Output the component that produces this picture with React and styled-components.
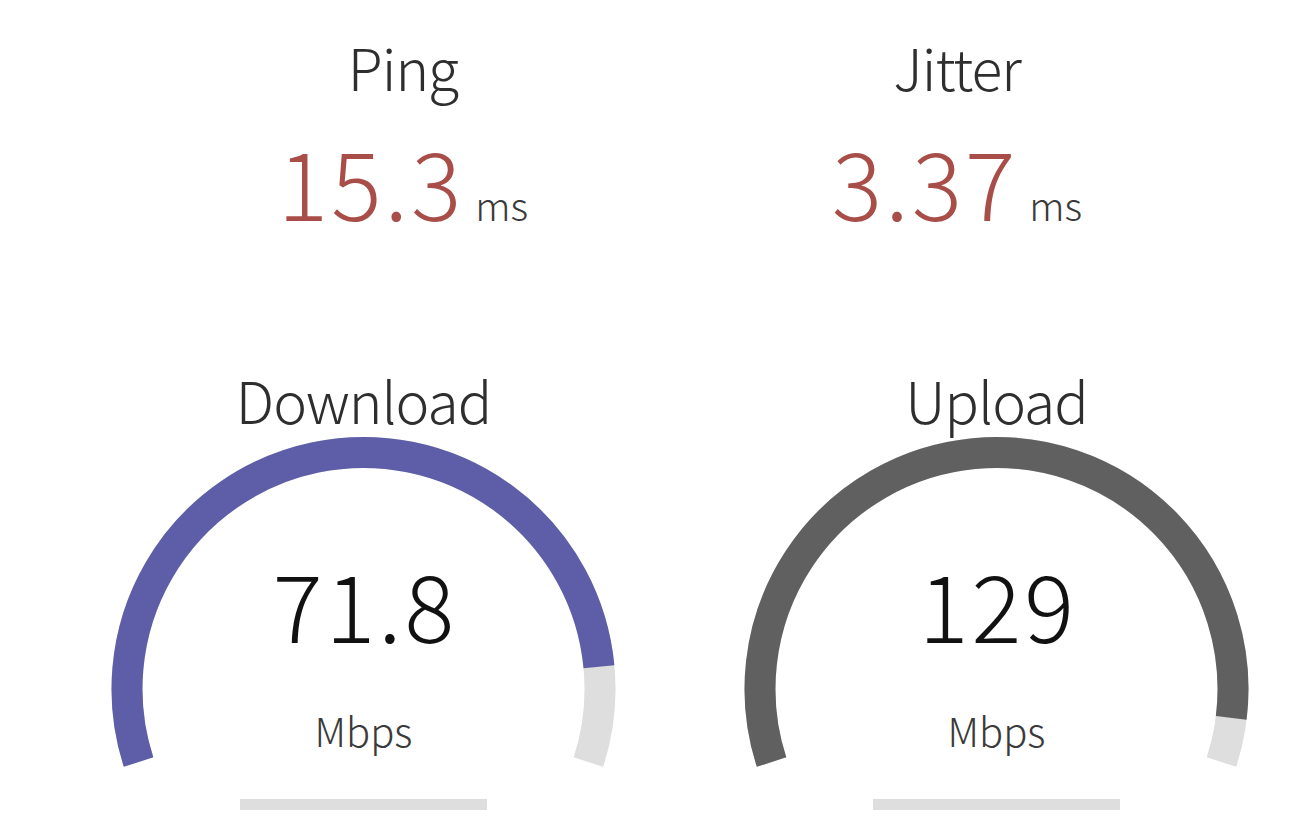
import React from "react";
import styled, { createGlobalStyle } from "styled-components";

const GlobalStyle = createGlobalStyle`
  html, body {
    margin: 0;
    padding: 0;
    background: #ffffff;
    overflow: hidden;
  }
  body {
    font-family: "Noto Sans CJK JP", "Noto Sans", sans-serif;
    color: #333333;
  }
`;

const Page = styled.div`
  width: 1360px;
  display: flex;
  flex-direction: column;
  align-items: center;
  padding-top: 38px;
`;

const Row = styled.div`
  display: flex;
  justify-content: center;
  margin-top: ${(p) => p.$gap || 0}px;
`;

const SmallArea = styled.div`
  width: 554px;
  text-align: center;
`;

const TestName = styled.div`
  font-size: 57px;
  line-height: 1;
  font-weight: 300;
  letter-spacing: -1px;
  color: #2e2e2e;
  text-align: center;
`;

const SmallValue = styled.div`
  margin-top: 38px;
  font-size: 94px;
  line-height: 1;
  font-weight: 300;
  letter-spacing: 3px;
  color: #a84d48;
  white-space: nowrap;
`;

const SmallUnit = styled.span`
  font-size: 39px;
  margin-left: 11px;
  letter-spacing: 0;
  color: #3a3a3a;
  font-weight: 300;
`;

const MeterArea = styled.div`
  position: relative;
  width: 633px;
`;

const GaugeSvg = styled.svg`
  display: block;
  width: 633px;
  height: 390px;
`;

const Readout = styled.div`
  position: absolute;
  top: 185px;
  left: 0;
  right: 0;
  display: flex;
  flex-direction: column;
  align-items: center;
`;

const MeterValue = styled.div`
  font-size: 93px;
  line-height: 1;
  font-weight: 300;
  letter-spacing: 3px;
  margin-left: 3px;
  color: #111111;
`;

const MeterUnit = styled.div`
  margin-top: 61px;
  font-size: 40px;
  line-height: 1;
  font-weight: 300;
  color: #3a3a3a;
`;

const CX = 316.5;
const CY = 261;
const R = 236.5;
const STROKE = 31;

function point(a) {
  return [CX + R * Math.cos(a), CY + R * Math.sin(a)];
}

function arcPath(from, to) {
  const [x0, y0] = point(from);
  const [x1, y1] = point(to);
  const large = to - from > Math.PI ? 1 : 0;
  return `M ${x0} ${y0} A ${R} ${R} 0 ${large} 1 ${x1} ${y1}`;
}

// same curve librespeed uses to turn Mbps into a needle amount
const mbpsToAmount = (s) => 1 - 1 / Math.pow(1.3, Math.sqrt(s));

function Gauge({ value, color }) {
  const start = -Math.PI * 1.1;
  const end = Math.PI * 0.1;
  const amount = mbpsToAmount(value);
  const fillEnd = start + amount * Math.PI * 1.2;
  return (
    <GaugeSvg viewBox="0 0 633 390">
      <path d={arcPath(start, end)} fill="none" stroke="#dedede" strokeWidth={STROKE} />
      <path d={arcPath(start, fillEnd)} fill="none" stroke={color} strokeWidth={STROKE} />
      <rect x="193" y="371" width="247" height="11" fill="#dedede" />
    </GaugeSvg>
  );
}

function Meter({ name, value, color }) {
  return (
    <MeterArea>
      <TestName>{name}</TestName>
      <Gauge value={value} color={color} />
      <Readout>
        <MeterValue>{value}</MeterValue>
        <MeterUnit>Mbps</MeterUnit>
      </Readout>
    </MeterArea>
  );
}

function Small({ name, value }) {
  return (
    <SmallArea>
      <TestName>{name}</TestName>
      <SmallValue>
        {value}
        <SmallUnit>ms</SmallUnit>
      </SmallValue>
    </SmallArea>
  );
}

export default function App() {
  return (
    <>
      <GlobalStyle />
      <Page>
        <Row>
          <Small name="Ping" value="15.3" />
          <Small name="Jitter" value="3.37" />
        </Row>
        <Row $gap={144}>
          <Meter name="Download" value={71.8} color="#5e5ea8" />
          <Meter name="Upload" value={129} color="#606060" />
        </Row>
      </Page>
    </>
  );
}
